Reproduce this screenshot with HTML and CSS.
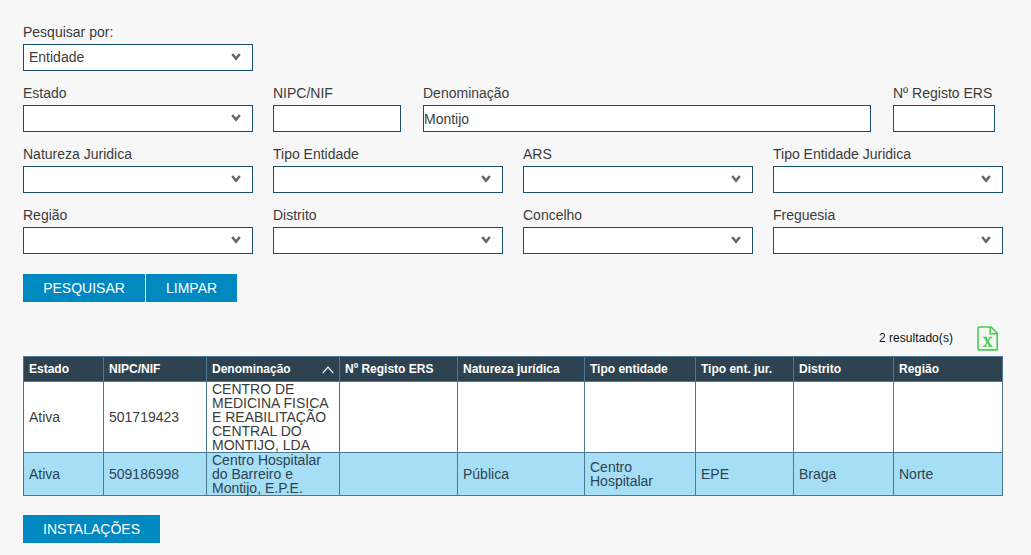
FILE: index.html
```html
<!DOCTYPE html>
<html lang="pt">
<head>
<meta charset="utf-8">
<title>Pesquisa de entidades</title>
<link rel="stylesheet" href="styles.css">
</head>
<body>
<svg width="0" height="0" class="defs">
  <symbol id="chev" viewBox="0 0 10 8"><path d="M1.2 1 5 5.7 8.8 1" fill="none" stroke="#666" stroke-width="2.5"/></symbol>
</svg>
<main class="page">
  <form class="search">
    <div class="row">
      <div class="field"><label>Pesquisar por:</label><div class="box select"><span>Entidade</span><svg><use href="#chev"/></svg></div></div>
    </div>
    <div class="row">
      <div class="field"><label>Estado</label><div class="box select"><span></span><svg><use href="#chev"/></svg></div></div>
      <div class="field nif"><label>NIPC/NIF</label><div class="box"></div></div>
      <div class="field name"><label>Denominação</label><div class="box">Montijo</div></div>
      <div class="field reg"><label>Nº Registo ERS</label><div class="box"></div></div>
    </div>
    <div class="row">
      <div class="field"><label>Natureza Juridica</label><div class="box select"><span></span><svg><use href="#chev"/></svg></div></div>
      <div class="field"><label>Tipo Entidade</label><div class="box select"><span></span><svg><use href="#chev"/></svg></div></div>
      <div class="field"><label>ARS</label><div class="box select"><span></span><svg><use href="#chev"/></svg></div></div>
      <div class="field"><label>Tipo Entidade Juridica</label><div class="box select"><span></span><svg><use href="#chev"/></svg></div></div>
    </div>
    <div class="row">
      <div class="field"><label>Região</label><div class="box select"><span></span><svg><use href="#chev"/></svg></div></div>
      <div class="field"><label>Distrito</label><div class="box select"><span></span><svg><use href="#chev"/></svg></div></div>
      <div class="field"><label>Concelho</label><div class="box select"><span></span><svg><use href="#chev"/></svg></div></div>
      <div class="field"><label>Freguesia</label><div class="box select"><span></span><svg><use href="#chev"/></svg></div></div>
    </div>
  </form>
  <div class="actions">
    <button type="button">PESQUISAR</button>
    <button type="button">LIMPAR</button>
  </div>
  <div class="summary">
    <span>2 resultado(s)</span>
    <svg class="excel" viewBox="0 0 22 25" fill="none" stroke="#46cf50" stroke-width="1.6">
      <path d="M1.8 1H14l6.2 6.2V23.9H1.8Q1 23.9 1 23V1.8Q1 1 1.8 1Z" stroke-linejoin="round"/>
      <path d="M13.2 1v6.8h7"/>
      <path d="M7.8 11.4 13.6 20.4" stroke-width="2.1"/>
      <path d="M13.4 11.4 7.6 20.4" stroke-width="1.3"/>
      <path d="M6.2 11.3h3.8M11.8 11.3h3.4M6 20.4h3.6M11.5 20.4h4" stroke-width="1.3"/>
    </svg>
  </div>
  <table class="results">
    <colgroup><col class="c1"><col class="c2"><col class="c3"><col class="c4"><col class="c5"><col class="c6"><col class="c7"><col class="c8"><col class="c9"></colgroup>
    <thead>
      <tr>
        <th>Estado</th><th>NIPC/NIF</th>
        <th><div class="sorted"><span>Denominação</span><svg viewBox="0 0 12 8"><path d="M.7 7.2 6 1.2l5.3 6" fill="none" stroke="#fff" stroke-width="1.2"/></svg></div></th>
        <th>Nº Registo ERS</th><th>Natureza jurídica</th><th>Tipo entidade</th><th>Tipo ent. jur.</th><th>Distrito</th><th>Região</th>
      </tr>
    </thead>
    <tbody>
      <tr class="first">
        <td>Ativa</td><td>501719423</td><td>CENTRO DE<br>MEDICINA FISICA<br>E REABILITAÇÃO<br>CENTRAL DO<br>MONTIJO, LDA</td>
        <td></td><td></td><td></td><td></td><td></td><td></td>
      </tr>
      <tr class="alt">
        <td>Ativa</td><td>509186998</td><td>Centro Hospitalar<br>do Barreiro e<br>Montijo, E.P.E.</td>
        <td></td><td>Pública</td><td>Centro<br>Hospitalar</td><td>EPE</td><td>Braga</td><td>Norte</td>
      </tr>
    </tbody>
  </table>
  <div class="footer"><button type="button">INSTALAÇÕES</button></div>
</main>
</body>
</html>
```
FILE: styles.css
```css
* { box-sizing: border-box; }
body {
  margin: 0;
  background: #f7f7f7;
  color: #3c3c3c;
  font: 14px/16px "Liberation Sans", Arial, sans-serif;
  overflow: hidden;
}
.defs { position: absolute; }
.page { padding: 24px 28px 0 23px; }
.search { display: flex; flex-direction: column; gap: 14px; }
.row { display: flex; gap: 20px; }
.field { width: 230px; display: flex; flex-direction: column; gap: 4px; }
.nif { width: 128px; }
.name { width: 448px; margin-left: 2px; }
.reg { width: 102px; margin-left: 2px; }
.box {
  height: 27px;
  border: 1px solid #174f70;
  background: #fff;
  line-height: 26px;
}
.select {
  display: flex;
  justify-content: space-between;
  align-items: center;
  padding: 0 11px 2px 5px;
}
.select svg { width: 10px; height: 8px; }
.actions { display: flex; gap: 1px; width: 214px; margin-top: 20px; background: #fff; }
button {
  height: 28px;
  padding: 0 20px;
  border: 0;
  background: #0088c1;
  color: #fff;
  font: 14px/28px "Liberation Sans", Arial, sans-serif;
  white-space: nowrap;
}
.actions button:first-child { width: 122px; }
.actions button:last-child { width: 91px; }
.summary {
  display: flex;
  justify-content: flex-end;
  align-items: center;
  gap: 24px;
  height: 25px;
  margin: 24px 4px 5px 0;
  color: #111;
  font-size: 12px;
}
.summary span { padding-bottom: 2px; letter-spacing: 0.05px; }
.excel { width: 22px; height: 25px; }
.results {
  width: 980px;
  table-layout: fixed;
  border-collapse: separate;
  border-spacing: 0;
  border: solid #4b7795;
  border-width: 1px 0 0 1px;
}
.c1 { width: 80px; }
.c2 { width: 103px; }
.c3 { width: 133px; }
.c4 { width: 118px; }
.c5 { width: 127px; }
.c6 { width: 111px; }
.c7 { width: 98px; }
.c8 { width: 100px; }
.c9 { width: 109px; }
th, td {
  padding: 0 0 0 5px;
  border: solid #4b7795;
  border-width: 0 1px 1px 0;
  text-align: left;
  vertical-align: middle;
  line-height: 14px;
  white-space: nowrap;
}
th { height: 25px; background: #2d4351; color: #fff; font-size: 12px; }
td { background: #fff; }
.first td { height: 71px; }
.alt td { height: 43px; background: #a6def6; color: #2d4351; }
.sorted { display: flex; justify-content: space-between; align-items: center; padding-right: 5px; }
.sorted svg { width: 12px; height: 8px; margin-top: 1px; }
.footer { margin-top: 19px; }
.footer button { width: 137px; }
```
